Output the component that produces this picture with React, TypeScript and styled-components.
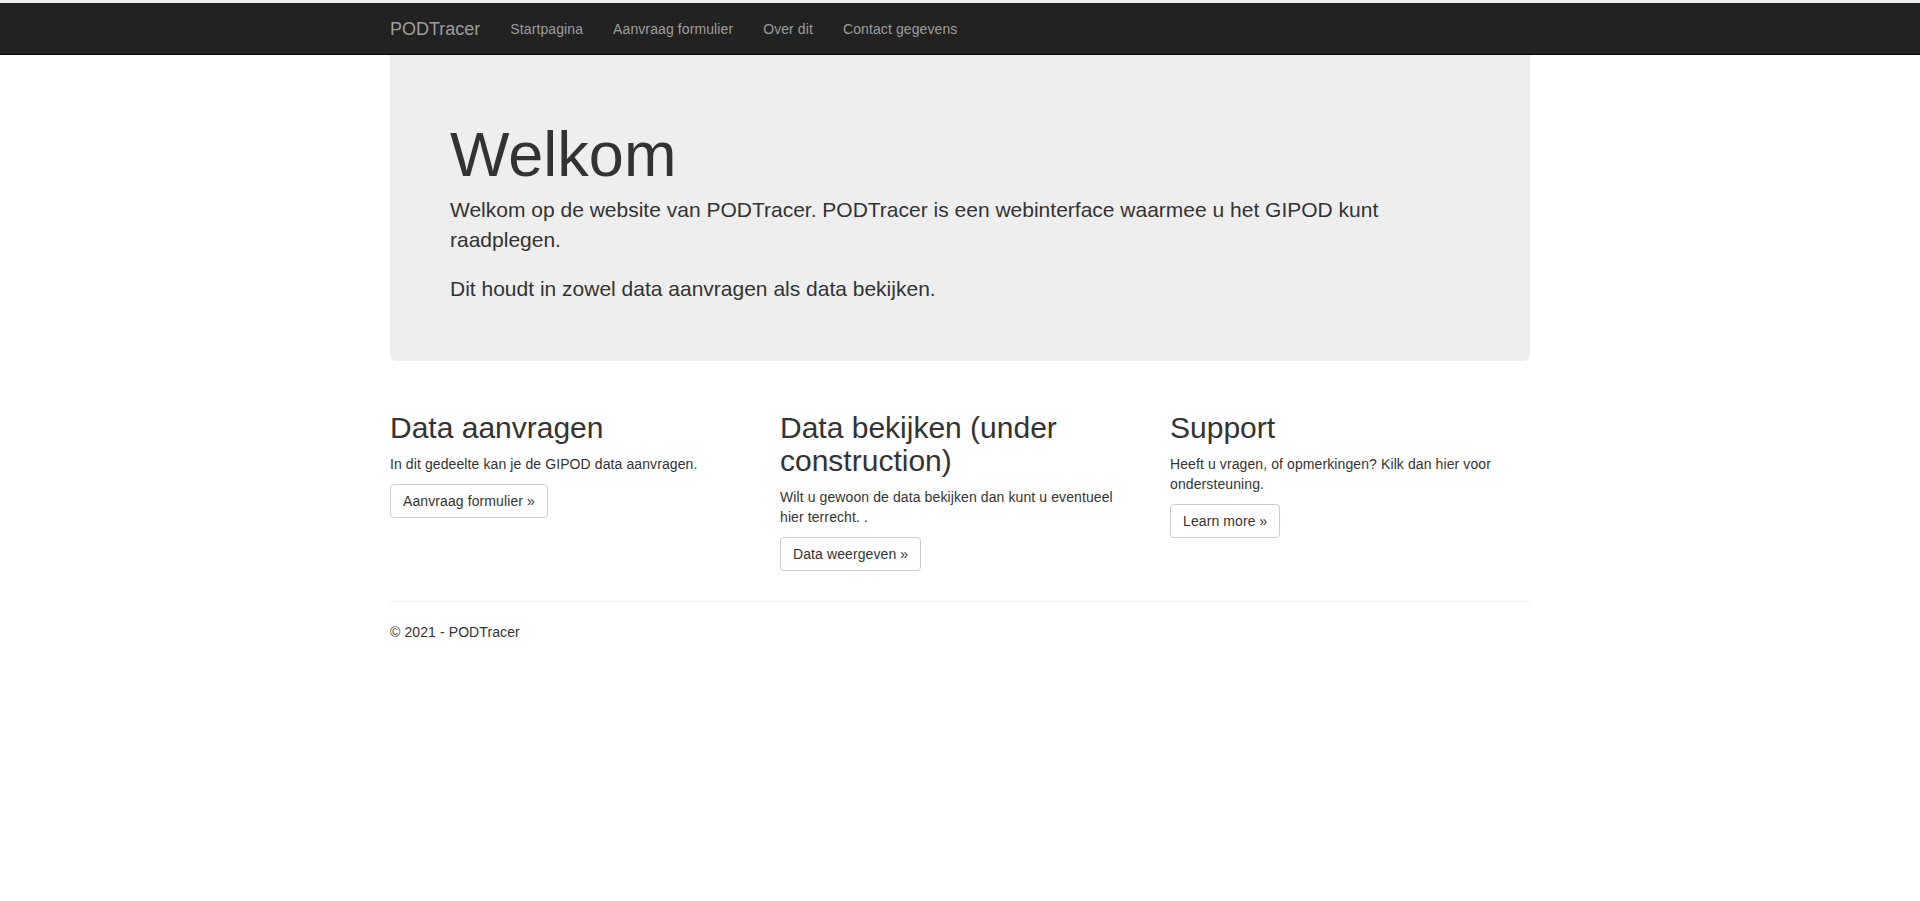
import React from "react";
import styled, { createGlobalStyle } from "styled-components";

const GlobalStyle = createGlobalStyle`
  html, body { margin: 0; padding: 0; background: #fff; }
  body {
    font-family: "Liberation Sans", Arial, Helvetica, sans-serif;
    font-size: 14px;
    line-height: 1.42857143;
    color: #333;
  }
  * { box-sizing: border-box; }
`;

const TopStrip = styled.div`
  height: 3px;
  background: #efefef;
`;

const Navbar = styled.nav`
  height: 52px;
  background: #222;
  border-bottom: 1px solid #080808;
`;

const Container = styled.div`
  width: 1170px;
  margin: 0 auto;
  padding: 0 15px;
`;

const NavInner = styled(Container)`
  display: flex;
  align-items: stretch;
  height: 51px;
`;

const Brand = styled.a`
  display: flex;
  align-items: center;
  margin-left: -15px;
  padding: 0 15px;
  font-size: 18px;
  line-height: 20px;
  color: #9d9d9d;
  text-decoration: none;
`;

const NavList = styled.ul`
  display: flex;
  list-style: none;
  margin: 0;
  padding: 0;
`;

const NavLink = styled.a`
  display: flex;
  align-items: center;
  height: 100%;
  padding: 0 15px;
  font-size: 14px;
  line-height: 20px;
  letter-spacing: 0.1px;
  color: #9d9d9d;
  text-decoration: none;
`;

const Jumbotron = styled.section`
  background: #eee;
  border-radius: 0 0 6px 6px;
  padding: 45px 60px 48px;
  margin-bottom: 30px;
`;

const Title = styled.h1`
  margin: 20px 0 6px;
  font-size: 63px;
  font-weight: 500;
  line-height: 1.1;
  color: #333;
`;

const Lead = styled.p`
  margin: 0 0 20px;
  font-size: 21px;
  font-weight: 300;
  line-height: 1.4;
  &:last-child { margin-bottom: 10px; }
`;

const Row = styled.div`
  display: grid;
  grid-template-columns: repeat(3, 1fr);
  margin: 0 -15px;
`;

const Col = styled.div`
  padding: 0 15px;
`;

const ColTitle = styled.h2`
  margin: 20px 0 10px;
  font-size: 30px;
  font-weight: 500;
  line-height: 1.1;
  color: #333;
`;

const Text = styled.p`
  margin: 0 0 10px;
  letter-spacing: 0.1px;
`;

const Button = styled.a`
  display: inline-block;
  padding: 6px 12px;
  font-size: 14px;
  line-height: 20px;
  letter-spacing: 0.1px;
  color: #333;
  background: #fff;
  border: 1px solid #ccc;
  border-radius: 4px;
  text-decoration: none;
  cursor: pointer;
`;

const Rule = styled.hr`
  margin: 20px 0;
  border: 0;
  border-top: 1px solid #eee;
`;

const Footer = styled.footer`
  p { margin: 0 0 10px; letter-spacing: 0.1px; }
`;

const columns = [
  {
    title: "Data aanvragen",
    text: "In dit gedeelte kan je de GIPOD data aanvragen.",
    button: "Aanvraag formulier »",
  },
  {
    title: "Data bekijken (under construction)",
    text: "Wilt u gewoon de data bekijken dan kunt u eventueel hier terrecht. .",
    button: "Data weergeven »",
  },
  {
    title: "Support",
    text: "Heeft u vragen, of opmerkingen? Kilk dan hier voor ondersteuning.",
    button: "Learn more »",
  },
];

export default function App() {
  return (
    <>
      <GlobalStyle />
      <TopStrip />
      <Navbar>
        <NavInner>
          <Brand href="#">PODTracer</Brand>
          <NavList>
            {["Startpagina", "Aanvraag formulier", "Over dit", "Contact gegevens"].map((l) => (
              <li key={l}>
                <NavLink href="#">{l}</NavLink>
              </li>
            ))}
          </NavList>
        </NavInner>
      </Navbar>
      <Container>
        <Jumbotron>
          <Title>Welkom</Title>
          <Lead>
            Welkom op de website van PODTracer. PODTracer is een webinterface waarmee u het GIPOD kunt
            raadplegen.
          </Lead>
          <Lead>Dit houdt in zowel data aanvragen als data bekijken.</Lead>
        </Jumbotron>
        <Row>
          {columns.map((c) => (
            <Col key={c.title}>
              <ColTitle>{c.title}</ColTitle>
              <Text>{c.text}</Text>
              <Text>
                <Button>{c.button}</Button>
              </Text>
            </Col>
          ))}
        </Row>
        <Rule />
        <Footer>
          <p>© 2021 - PODTracer</p>
        </Footer>
      </Container>
    </>
  );
}
